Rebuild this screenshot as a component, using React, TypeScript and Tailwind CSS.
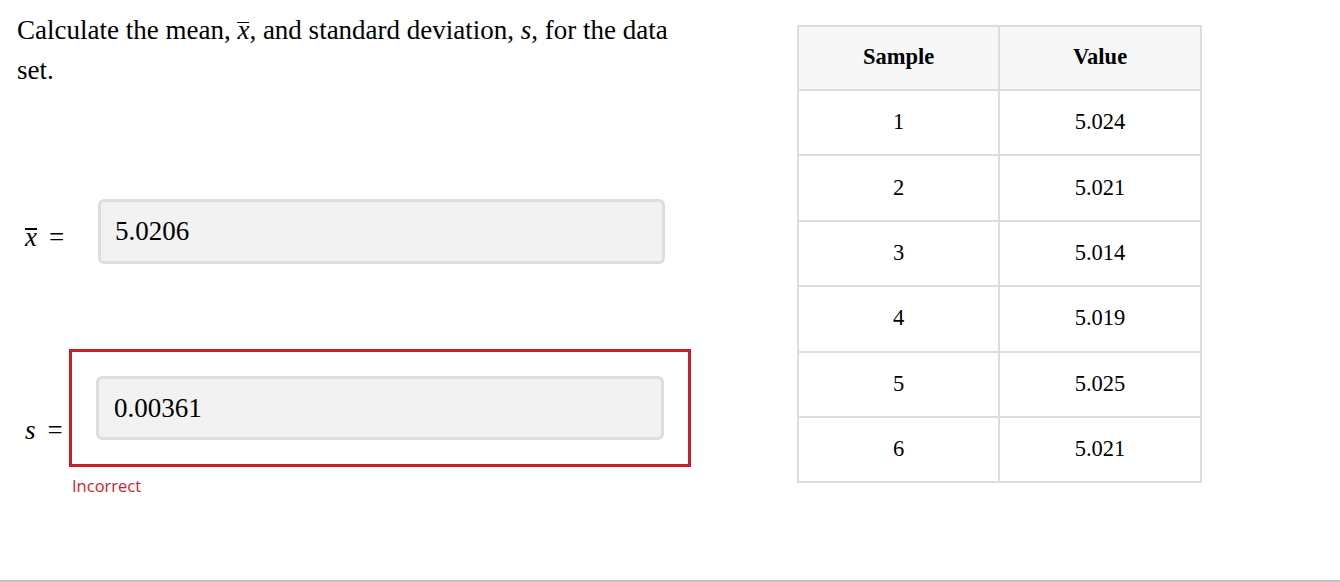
const rows = [
  { n: 1, v: "5.024" },
  { n: 2, v: "5.021" },
  { n: 3, v: "5.014" },
  { n: 4, v: "5.019" },
  { n: 5, v: "5.025" },
  { n: 6, v: "5.021" },
];

// x with an overline bar drawn just above the glyph
const XBar = () => (
  <span className="relative italic">
    x
    <span className="absolute left-0 right-0 top-[0.25em] h-[1.5px] bg-black" />
  </span>
);

const App = () => {
  return (
    <div className="flex h-[582px] w-full flex-col bg-white font-['Liberation_Serif',serif] text-black">
      <div className="flex flex-1">
        <div className="w-[797px] shrink-0 pl-[17px] pt-[10px]">
          <p className="w-[672px] text-[27px] leading-[40px]">
            Calculate the mean, <XBar />, and standard deviation, <span className="italic">s</span>, for the data set.
          </p>

          <div className="mt-[109px] flex items-center">
            <div className="w-[81px] pl-[8px] pt-[10px] text-[27px] leading-[28px]">
              <XBar />
              <span className="ml-[12px]">=</span>
            </div>
            <div className="flex h-[65px] w-[567px] items-center rounded-[6px] border-[3px] border-[#dddddd] bg-[#f2f2f2] pl-[14px] text-[27px]">
              5.0206
            </div>
          </div>

          <div className="mt-[85px] flex items-start">
            <div className="w-[52px] pl-[8px] pt-[67px] text-[27px] leading-[28px]">
              <span className="italic">s</span>
              <span className="ml-[12px]">=</span>
            </div>
            <div>
              <div className="h-[118px] w-[622px] border-[3px] border-[#c8202a] pl-[24px] pt-[24px]">
                <div className="flex h-[64px] w-[568px] items-center rounded-[6px] border-[3px] border-[#dddddd] bg-[#f2f2f2] pl-[15px] text-[27px]">
                  0.00361
                </div>
              </div>
              <div className="mt-[9px] pl-[3px] font-['Open_Sans',sans-serif] text-[16.5px] leading-[20px] text-[#cc1f2b]">
                Incorrect
              </div>
            </div>
          </div>
        </div>

        <div className="pt-[25px]">
          <table className="w-[405px] border-collapse text-center text-[22.5px]">
            <thead>
              <tr className="h-[64px] bg-[#f7f7f7]">
                <th className="w-[202px] border-2 border-[#dddddd] pb-[2px] font-bold">Sample</th>
                <th className="w-[203px] border-2 border-[#dddddd] pb-[2px] font-bold">Value</th>
              </tr>
            </thead>
            <tbody>
              {rows.map((r) => (
                <tr key={r.n} className="h-[65.4px]">
                  <td className="border-2 border-[#dddddd] pb-[1px]">{r.n}</td>
                  <td className="border-2 border-[#dddddd] pb-[1px]">{r.v}</td>
                </tr>
              ))}
            </tbody>
          </table>
        </div>
      </div>
      <div className="h-[2px] bg-[#c2c2c2]" />
    </div>
  );
};

export default App;
